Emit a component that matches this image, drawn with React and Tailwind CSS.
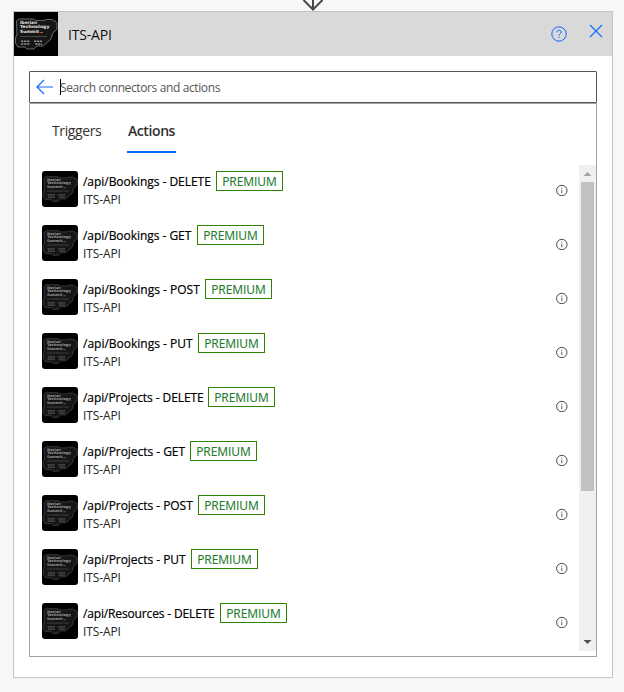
const actions = [
  { name: '/api/Bookings - DELETE', style: 'w-[134px] tracking-[-0.04px]' },
  { name: '/api/Bookings - GET', style: 'w-[115px] tracking-[-0.04px]' },
  { name: '/api/Bookings - POST', style: 'w-[123px]' },
  { name: '/api/Bookings - PUT', style: 'w-[116px]' },
  { name: '/api/Projects - DELETE', style: 'w-[126px] tracking-[-0.08px]' },
  { name: '/api/Projects - GET', style: 'w-[108px] tracking-[-0.04px]' },
  { name: '/api/Projects - POST', style: 'w-[116px] tracking-[-0.04px]' },
  { name: '/api/Projects - PUT', style: 'w-[109px] tracking-[-0.04px]' },
  { name: '/api/Resources - DELETE', style: 'w-[138px] tracking-[-0.15px]' },
];

function ConnectorLogo({ className, dim }) {
  return (
    <svg viewBox="0 0 44 44" className={className} aria-hidden="true">
      <rect width="44" height="44" fill="#000" />
      <path
        d="M2.5 9 4.5 7H20L22 8.5H30L32 7.5H38L43 10.5V17L38.5 21.5L37 27L29 34H23L20 37H13L11 35H4L1.5 31V26L3 22Z"
        fill="#161616"
        stroke={dim ? '#444' : '#686868'}
        strokeWidth="1"
      />
      <g
        fill={dim ? '#999' : '#e2e2e2'}
        fontFamily="'DejaVu Sans', sans-serif"
        fontWeight="700"
        fontSize="4.3"
      >
        <text x="6" y="12" textLength="17" lengthAdjust="spacingAndGlyphs">Iberian</text>
        <text x="6" y="16.4" textLength="29.5" lengthAdjust="spacingAndGlyphs">Technology</text>
        <text x="6" y="20.8" textLength="19" lengthAdjust="spacingAndGlyphs">Summit</text>
      </g>
      <rect x="26" y="20" width="3" height="1" fill="#c4502a" />
      <path d="M6 24.5H33" stroke="#484848" strokeWidth="1" />
      <path
        d="M7 29.3H16M20 29.3H28M7 32H16M21 32H28"
        stroke={dim ? '#5c5c5c' : '#8a8a8a'}
        strokeWidth="1.5"
        strokeDasharray="2.4 .6"
      />
    </svg>
  );
}

function InfoIcon() {
  return (
    <svg viewBox="0 0 12 12" className="mt-[13px] size-3 shrink-0" fill="none" aria-hidden="true">
      <circle cx="5.8" cy="6.5" r="5.2" stroke="#484644" />
      <path d="M5.8 5.7V9.2M5.8 3.6V4.7" stroke="#605e5c" />
    </svg>
  );
}

function ActionRow({ name, style }) {
  return (
    <li className="flex h-[54px] items-start">
      <ConnectorLogo dim className="size-9 shrink-0 rounded-[3px]" />
      <div className="ml-[4px] grow">
        <div className="flex h-5 items-center">
          <span
            className={`${style} shrink-0 whitespace-nowrap pl-px pt-[2px] text-[12px] text-black [-webkit-text-stroke:0.2px_#000]`}
          >
            {name}
          </span>
          <span className="flex h-5 w-[67px] items-center justify-center border border-[#2d8400] pt-px text-[12px] tracking-[-0.05px] text-[#217a2b] [-webkit-text-stroke:0.1px_#217a2b]">
            PREMIUM
          </span>
        </div>
        <div className="pl-px text-[12px] leading-[18px] tracking-[-0.1px] text-[#252423]">ITS-API</div>
      </div>
      <InfoIcon />
    </li>
  );
}

function Scrollbar() {
  return (
    <div className="flex h-[486px] w-[17px] shrink-0 flex-col items-center bg-[#f0f0f0]">
      <svg viewBox="0 0 17 17" className="size-[17px] shrink-0" aria-hidden="true">
        <path d="M4.5 11 8.5 7 12.5 11Z" fill="#a3a3a3" />
      </svg>
      <div className="h-[309px] w-[13px] bg-[#c1c1c1]" />
      <svg viewBox="0 0 17 17" className="mt-auto size-[17px] shrink-0" aria-hidden="true">
        <path d="M4.5 6 8.5 10 12.5 6Z" fill="#505050" />
      </svg>
    </div>
  );
}

export default function App() {
  return (
    <main className="h-[692px] w-[624px] overflow-hidden bg-[#f7f7f7] font-['Open_Sans','Noto_Sans',sans-serif]">
      <div className="flex h-[11px] pl-[302px]">
        <svg viewBox="0 0 22 11" className="h-[11px] w-[22px]" fill="none" aria-hidden="true">
          <path d="M11 0V9.5M1.5 0 11 9.5 20.5 0" stroke="#484848" strokeWidth="2" />
        </svg>
      </div>
      <section className="ml-[13px] h-[667px] w-[600px] border border-[#c3c3c3] bg-white">
        <header className="flex h-11 items-center bg-[#d9d9d9]">
          <ConnectorLogo className="size-11 shrink-0" />
          <h1 className="ml-[10px] grow text-[14px] tracking-[-0.2px] text-[#111]">ITS-API</h1>
          <svg viewBox="0 0 16 16" className="mr-[22px] mb-px size-4" fill="none" stroke="#1267ff" aria-hidden="true">
            <circle cx="8" cy="8" r="7.2" />
            <path d="M5.9 6.3C5.9 3.6 10.2 3.7 10.2 6.1C10.2 7.7 8 7.7 8 9.7M8 10.9V12" />
          </svg>
          <svg viewBox="0 0 14 14" className="mr-[9px] mb-[6px] size-[14px]" stroke="#1267ff" strokeWidth="1.1" aria-hidden="true">
            <path d="M1 1 13 13M13 1 1 13" />
          </svg>
        </header>
        <div className="mx-[15px] mt-[15px] flex h-8 items-center rounded-[1px] border border-[#555]">
          <svg viewBox="0 0 17 16" className="ml-[6px] h-4 w-[17px]" fill="none" stroke="#1267ff" strokeWidth="1.2" aria-hidden="true">
            <path d="M17 8H1M8 1 1 8 8 15" />
          </svg>
          <div className="ml-[7px] h-4 w-px bg-black" />
          <span className="-ml-px pt-[2px] text-[12px] tracking-[-0.38px] text-[#555]">Search connectors and actions</span>
        </div>
        <div className="mx-[15px] h-[554px] border border-[#a3a3a3]">
          <nav className="flex h-[61px] pl-[22px] pt-[15px] text-[14px] text-[#323130]">
            <span className="h-[34px] w-[50px] leading-6 tracking-[-0.4px]">Triggers</span>
            <span className="ml-[25px] h-[34px] w-[49px] whitespace-nowrap border-b-2 border-[#0066ff] text-center font-semibold leading-6 tracking-[-0.4px]">
              Actions
            </span>
          </nav>
          <div className="flex h-[486px] overflow-hidden">
            <ul className="grow pl-3 pr-[11px] pt-[6px]">
              {actions.map((action) => (
                <ActionRow key={action.name} {...action} />
              ))}
            </ul>
            <Scrollbar />
          </div>
        </div>
      </section>
    </main>
  );
}
